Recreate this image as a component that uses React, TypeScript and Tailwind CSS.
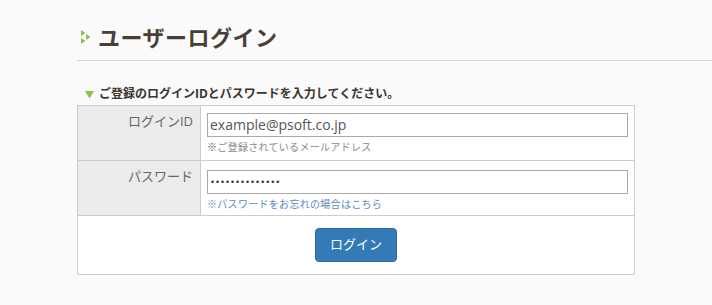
import React from "react";

const font = { fontFamily: '"Open Sans", "Noto Sans CJK JP", sans-serif' };

function TitleIcon() {
  return (
    <svg width="10" height="14" viewBox="0 0 10 14" className="shrink-0">
      <polygon points="0,0 4.5,3 0,6" fill="#8cc04b" />
      <polygon points="0,8 4.5,11 0,14" fill="#8cc04b" />
      <polygon points="5,4 9.5,7 5,10" fill="#8cc04b" />
    </svg>
  );
}

function DownTriangle() {
  return (
    <svg width="9" height="9" viewBox="0 0 9 9" className="shrink-0">
      <polygon points="0,1 9,1 4.5,8.5" fill="#8cc04b" />
    </svg>
  );
}

export default function App() {
  return (
    <div className="min-h-[305px] w-[712px] bg-[#fafafa]" style={font}>
      <div className="pl-[77px]">
        <div className="flex h-[61px] items-start border-b border-[#d6d6d6] pt-[22px]">
          <div className="flex items-center gap-[7px] pl-[4px]">
            <TitleIcon />
            <h1 className="text-[22px] leading-[30px] font-bold tracking-[0.5px] text-[#4b3e35]">ユーザーログイン</h1>
          </div>
        </div>

        <div className="mt-[23px] flex h-[20px] items-center gap-[5px] pl-[8px]">
          <DownTriangle />
          <p className="text-[12px] font-bold text-[#3d342e]">ご登録のログインIDとパスワードを入力してください。</p>
        </div>

        <div className="mt-[1px] w-[558px] border border-[#cccccc] bg-white">
          <div className="flex h-[55px] border-b border-[#cccccc]">
            <div className="w-[123px] shrink-0 border-r border-[#cccccc] bg-[#ebebeb] pt-[6px] pr-[7px] text-right text-[13px] text-[#666]">
              ログインID
            </div>
            <div className="flex-1 pt-[6px] pl-[6px]">
              <input
                type="text"
                defaultValue="example@psoft.co.jp"
                className="h-[24px] w-[421px] border border-[#a9a9a9] bg-white px-[2px] text-[14px] text-[#555] outline-none"
                style={font}
              />
              <p className="mt-[3px] text-[10px] leading-[14px] tracking-[0.3px] text-[#8a8a8a]">
                <span className="text-[#555]">※</span>ご登録されているメールアドレス
              </p>
            </div>
          </div>

          <div className="flex h-[55px] border-b border-[#cccccc]">
            <div className="w-[123px] shrink-0 border-r border-[#cccccc] bg-[#ebebeb] pt-[6px] pr-[7px] text-right text-[13px] text-[#666]">
              パスワード
            </div>
            <div className="flex-1 pt-[6px] pl-[6px]">
              <input
                type="password"
                defaultValue="examplepass123"
                className="h-[24px] w-[421px] border border-[#a9a9a9] bg-white px-[2px] text-[8.5px] text-[#333] outline-none"
                style={{ fontFamily: '"DejaVu Sans", sans-serif' }}
              />
              <a href="#" className="mt-[3px] block text-[10px] leading-[14px] tracking-[0.3px] text-[#5b8ac4]">
                ※パスワードをお忘れの場合はこちら
              </a>
            </div>
          </div>

          <div className="flex h-[58px] justify-center pt-[12px]">
            <button className="h-[34px] w-[82px] rounded-[4px] border border-[#2e6da4] bg-[#337ab7] text-[13px] text-white">
              ログイン
            </button>
          </div>
        </div>
      </div>
    </div>
  );
}
